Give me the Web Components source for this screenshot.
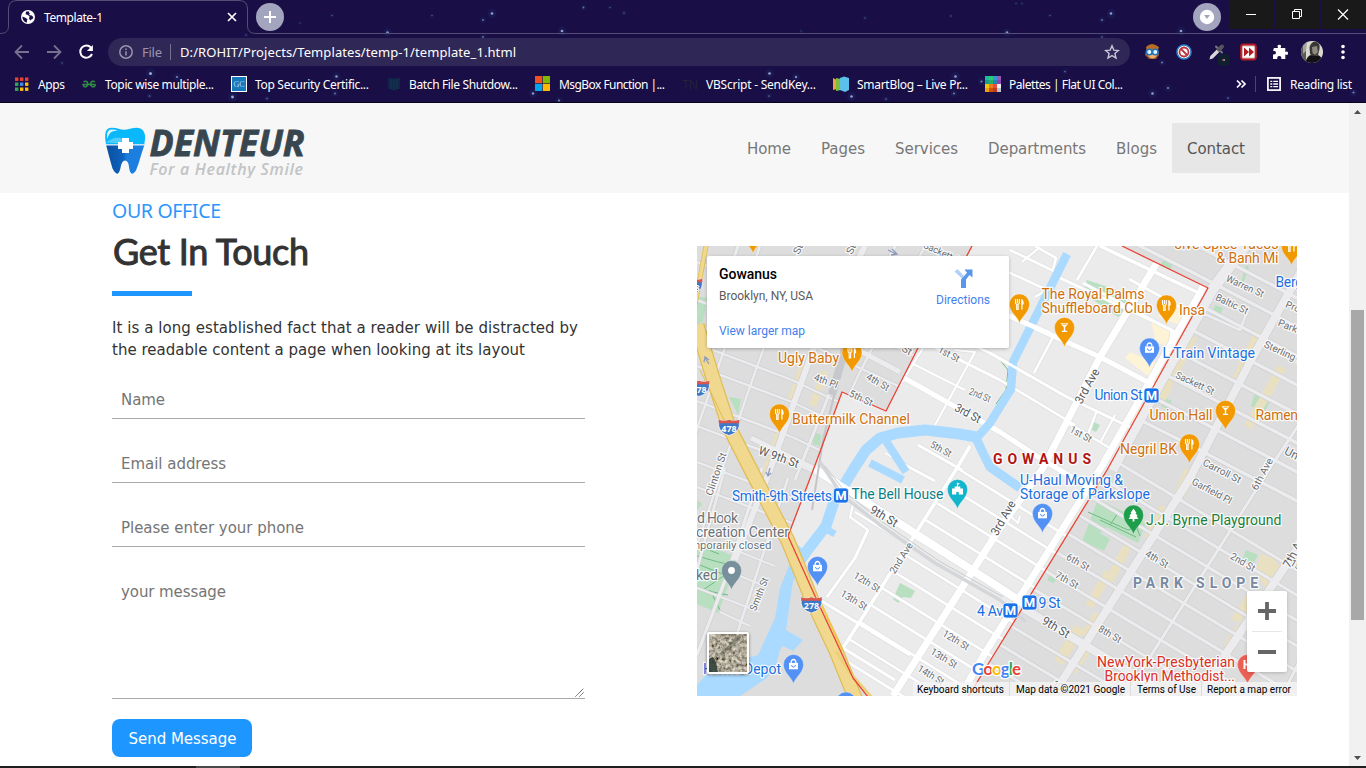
<!DOCTYPE html>
<html lang="en">
<head>
<meta charset="utf-8">
<title>Template-1</title>
<style>
html,body{margin:0;height:768px;overflow:hidden;background:#fff}
body{font-family:"Open Sans","Noto Sans",sans-serif}
</style>
</head>
<body>
<app-window></app-window>

<template id="t-window">
<style>
:host{display:grid;grid-template-rows:103px 663px 2px;width:1366px;height:768px}
main{display:grid;grid-template-columns:1349px 17px;min-height:0}
.task{background:#1f1f1f;display:flex}
.task i{margin-left:196px;width:44px;background:#4a4a4a}
.page{display:grid;grid-template-rows:90px 1fr;background:#fff;overflow:hidden}
.cols{display:grid;grid-template-columns:473px 600px;column-gap:112px;padding-left:112px}
</style>
<browser-chrome></browser-chrome>
<main>
<div class="page"><site-header></site-header>
<div class="cols"><contact-form></contact-form><office-map></office-map></div></div>
<scroll-bar></scroll-bar>
</main>
<div class="task"><i></i></div>
</template>

<template id="t-chrome">
<style>
:host{display:grid;grid-template-rows:34px 36px 32px;height:102px;border-bottom:1px solid #08041d;background:#190e45;color:#fff;position:relative;font:12px "Noto Sans","Open Sans",sans-serif;overflow:hidden}
.sky{position:absolute;inset:0}
.row{display:flex;align-items:center;position:relative}
.tab{width:240px;height:34px;margin-left:8px;display:flex;align-items:center;position:relative;box-sizing:border-box}
.tab>svg.fav{margin-left:13px}
.tab fit-text{margin-left:9px;flex:0 0 60px}
.tab .x{margin-left:123px}
.edge{position:absolute;left:-8px;top:0}
.plus{margin-left:8px}
.acct{margin-left:909px}
.win{margin-left:8px;display:grid;grid-template-columns:45px 45px 45px;column-gap:1px;align-self:flex-start}
.win svg{background:#191919;display:block}
.nav{display:flex;margin-left:13px;gap:14px}
.omni{margin-left:13px;width:1022px;height:28px;border-radius:14px;background:#2f2756;display:flex;align-items:center;font-size:13px;box-sizing:border-box;padding-left:11px}
.omni .file{margin-left:9px;color:#9a94ae}
.omni i{width:1px;height:16px;background:#77718f;margin:0 9px 0 8px}
.omni .star{margin-left:auto;margin-right:10px}
.ext{display:flex;margin-left:11px;align-items:center}
.ext .av{margin-left:2px}
.ext .dots{margin-left:-2px;width:20px;height:28px}
.bm{display:flex;align-items:center;height:28px}
.bm svg{flex:none}
.books{display:flex;padding-left:14px;margin-top:-4px;width:1222px;box-sizing:border-box}
.more{display:flex;align-items:center;margin-top:-4px}
.more i{width:1px;height:16px;background:#4d456c;margin:0 11px 0 9px}
</style>
<svg class="sky" width="1366" height="103"></svg>
<div class="row">
 <div class="tab">
  <svg class="edge" width="1366" height="34" fill="none" stroke="#554d74"><path d="M0 33.5C6 33.5 8.500 31 8.500 26V9Q8.500 .5 17 .5H239Q247.500 .5 247.500 9V26Q247.500 33.500 256 33.500H1366"/></svg>
  <svg class="fav" width="14" height="14" viewBox="0 0 14 14"><circle cx="7" cy="7" r="7" fill="#fff"/><path d="M7.500 1.200L5 1.800 4.600 4.300 6.300 4.700 8.600 6.200 8 8.200 9.200 10.500 10.400 9.500 12 8.600 12.300 7 10.600 5.500 8 5 8.800 3.800z" fill="#190e45"/><path d="M1.400 6.500L4.300 7.800 6.600 9.200 5.800 10.800 6 12.600C3.500 12.400 1.300 9.800 1.400 6.500z" fill="#190e45"/></svg>
  <fit-text w="59">Template-1</fit-text>
  <svg class="x" width="10" height="10" stroke="#fff" stroke-width="1.700"><path d="M1 1l8 8M9 1l-8 8"/></svg>
 </div>
 <svg class="plus" width="28" height="28"><circle cx="14" cy="14" r="14" fill="#a3a5be"/><path d="M14 8v12M8 14h12" stroke="#fff" stroke-width="2"/></svg>
 <svg class="acct" width="28" height="28"><circle cx="14" cy="14" r="14" fill="#a3a5be"/><circle cx="14" cy="14" r="7.200" fill="#fff"/><path d="M11 12h6l-3 4z" fill="#a3a5be"/></svg>
 <div class="win">
  <svg width="45" height="29" stroke="#fff" fill="none"><path d="M17 14.500h10"/></svg>
  <svg width="45" height="29" stroke="#fff" fill="none"><path d="M17.500 11.500h7v7h-7zM19.500 11V9.500h7v7H25"/></svg>
  <svg width="45" height="29" stroke="#fff" stroke-width="1.200" fill="none"><path d="M17 9.500l10 10M27 9.500l-10 10"/></svg>
 </div>
</div>
<div class="row">
 <div class="nav">
  <svg width="18" height="18" viewBox="0 0 18 18" fill="none" stroke="#777190" stroke-width="1.800"><path d="M16 9H3M9 2.500L2.500 9 9 15.500"/></svg>
  <svg width="18" height="18" viewBox="0 0 18 18" fill="none" stroke="#777190" stroke-width="1.800"><path d="M2 9h13M9 2.500L15.500 9 9 15.500"/></svg>
  <svg width="18" height="18" viewBox="0 0 18 18" fill="none" stroke="#fff" stroke-width="2"><path d="M14 4.600A6.100 6.100 0 1 0 15 11"/><path d="M15.900 2v6h-6z" fill="#fff" stroke="none"/></svg>
 </div>
 <div class="omni">
  <svg width="14" height="14" fill="none" stroke="#9a94ae" stroke-width="1.500"><circle cx="7" cy="7" r="6.200"/><path d="M7 6.200V10.500M7 3.500V5"/></svg>
  <fit-text class="file" w="20">File</fit-text><i></i>
  <fit-text w="336">D:/ROHIT/Projects/Templates/temp-1/template_1.html</fit-text>
  <svg class="star" width="16" height="16" viewBox="0 0 16 16" fill="none" stroke="#c9c5d8" stroke-width="1.400"><path d="M8 1.800l1.800 4.300 4.600.4-3.500 3 1.100 4.500L8 11.600 4 14l1.100-4.500-3.500-3 4.600-.4z"/></svg>
 </div>
 <div class="ext">
  <svg width="32" height="28" viewBox="0 0 32 28"><path d="M6 8q5-4 10 0l2 9-3 4H8l-4-4z" fill="#a35b1d"/><ellipse cx="11.500" cy="14.500" rx="5" ry="6" fill="#f2ad76"/><path d="M5 9q6-5 13 0l-1 3H6z" fill="#b96d26"/><g fill="#e6f5ff" stroke="#1c75bd" stroke-width="1.600"><circle cx="8.300" cy="14" r="2.800"/><circle cx="14.300" cy="14" r="2.800"/></g></svg>
  <svg width="32" height="28" viewBox="0 0 32 28"><circle cx="11" cy="14" r="7" fill="#fff" stroke="#2f7fc9" stroke-width="1.600"/><circle cx="11" cy="14" r="4.500" fill="#fff" stroke="#b9343c" stroke-width="1.800"/><path d="M8 11l6 6" stroke="#b9343c" stroke-width="1.800"/></svg>
  <svg width="32" height="28" viewBox="0 0 32 28"><path d="M4.500 21.500l.8-3.500 7-7 2.500 2.500-7 7z" fill="#d8d8d8"/><path d="M11 8.500l6 6" stroke="#77767c" stroke-width="2" stroke-linecap="round"/><path d="M14 11.500l3-3" stroke="#55555c" stroke-width="4" stroke-linecap="round"/><rect x="13" y="16.500" width="11.500" height="11" rx="2" fill="#10202f"/><path d="M17 22h2" stroke="#ff4b4b"/><path d="M18.500 22h1.500" stroke="#fff"/></svg>
  <svg width="32" height="28" viewBox="0 0 32 28"><rect x="4" y="6.500" width="15" height="15" rx="2.500" fill="#d8b6b8" stroke="#b01c22" stroke-width="1.800"/><rect x="6" y="8.500" width="11" height="11" fill="#fff"/><path d="M7 9.500l5 4.500-5 4.500zM12 9.500l5 4.500-5 4.500z" fill="#b01c22"/></svg>
  <svg width="29" height="28" viewBox="0 0 29 28"><path d="M5 10h4q-1.500-3.200 1.300-3.200T11.600 10h4.700v4q2.800-1.300 2.800 1.200t-2.800 1.300v4.500h-4q.5-3-2-3t-2 3H4v-4.500q3 .5 3-1.700t-3-2z" fill="#fff"/></svg>
  <svg class="av" width="32" height="28" viewBox="0 0 32 28"><defs><clipPath id="av"><circle cx="12" cy="14" r="11"/></clipPath></defs><g clip-path="url(#av)"><path d="M0 0h28v28H0z" fill="#d9d9d0"/><path d="M0 0h6v28H0z" fill="#5a5a57"/><path d="M3 5q2-4 4-1l-1 9-3 3z" fill="#a5a59f"/><path d="M9.500 9q2-6 7-5 4 1 3 7l-1.500 6-4 2-4-3z" fill="#3a3835"/><path d="M12 9l5-1 1 6-3 3-2.500-2z" fill="#8f8982"/><path d="M5 28q1-10 6-11 5 2 7 0 5 2 6 11z" fill="#121214"/></g></svg>
  <svg class="dots" viewBox="0 0 20 28" fill="#fff"><circle cx="13" cy="8.500" r="1.800"/><circle cx="13" cy="14" r="1.800"/><circle cx="13" cy="19.500" r="1.800"/></svg>
 </div>
</div>
<div class="row">
 <div class="books"></div>
 <div class="more">
  <svg width="30" height="16" fill="none" stroke="#fff" stroke-width="1.700" style="margin-left:14px;width:10px"><path d="M1 4.500l3.500 3.500L1 11.500M5.500 4.500L9 8l-3.500 3.500"/></svg><i></i>
  <svg width="14" height="14" fill="none" stroke="#fff"><rect x=".9" y=".9" width="12.200" height="12.200" stroke-width="1.700"/><path d="M3.300 4.300h2M6.300 4.300h4.700M3.300 7h2M6.300 7h4.700M3.300 9.700h2M6.300 9.700h4.700" stroke-width="1.300"/></svg>
  <fit-text w="62" style="margin-left:9px">Reading list</fit-text>
 </div>
</div>
</template>

<template id="t-header">
<style>
:host{display:flex;align-items:center;background:#f7f7f7;height:90px;font:15px "DejaVu Sans",sans-serif;color:#777}
.logo{margin-left:104px;display:block}
nav{display:flex;margin-left:426px}
a{padding:0 15px;height:50px;line-height:53px}
a.on{background:#e7e7e7;color:#555}
</style>
<svg class="logo" width="202" height="60" viewBox="104 118 202 60">
<defs><linearGradient id="tr" x1="0" x2="1"><stop offset="0" stop-color="#0b4f9e"/><stop offset=".45" stop-color="#0d63c0"/><stop offset=".55" stop-color="#1c7fe0"/></linearGradient></defs>
<path d="M106 144.500C108 152 110 160 112.500 168.500Q118 179 120.500 168 121.500 160.500 125 160.500T129 167Q130.500 178.500 136 170.500 139 163 140.500 157L144.500 144.500z" fill="url(#tr)"/>
<path d="M106 144C104.500 136 104.500 128 111 127.800 117 127.500 120 130 125 129.800 131 129 136 126.500 141 128.800 146 132 145.500 138 144.300 144z" fill="#08b8fb"/>
<path d="M107 139Q106 130 111 129.500 115 129 117.500 130.800 112 130.500 109.500 134 108 136.500 107 139z" fill="#d7f3ff"/>
<path d="M106 142.500Q118 134 123 140L119 143.500z" fill="#4fcdfc"/>
<path d="M105.500 144.800h39" stroke="#d8efff" stroke-width="1.200"/>
<path d="M122 138h7v4h4v7h-4v4h-7v-4h-4v-7h4z" fill="#fff"/>
<text x="149.500" y="155.500" font-family="Open Sans" font-weight="700" font-style="italic" font-size="35.500" fill="#37464f" stroke="#37464f" stroke-width=".8" textLength="155" lengthAdjust="spacingAndGlyphs">DENTEUR</text>
<text x="149.500" y="174.500" font-family="Open Sans" font-weight="600" font-style="italic" font-size="16" fill="#c2c3c4" textLength="153.500" lengthAdjust="spacing">For a Healthy Smile</text>
</svg>
<nav><a><fit-text w="44">Home</fit-text></a><a><fit-text w="44">Pages</fit-text></a><a><fit-text w="63">Services</fit-text></a><a><fit-text w="98">Departments</fit-text></a><a><fit-text w="41">Blogs</fit-text></a><a class="on"><fit-text w="58">Contact</fit-text></a></nav>
</template>

<template id="t-form">
<style>
:host{display:flex;flex-direction:column;font:15px "DejaVu Sans",sans-serif;color:#333}
.o{font:400 19.500px/26px "Noto Sans",sans-serif;color:#2c96fb;margin-top:5px}
h2{margin:4px 0 0;font:400 36px/46px Lato,sans-serif;-webkit-text-stroke:1px #333;padding-left:1px}
hr{margin:17px 0 21px;border:0;width:80px;height:5px;background:#1e96ff}
p{margin:0 0 20px;line-height:22px;height:44px}
.btn{margin-top:20px;width:139px;padding-left:1px;height:38px;border-radius:8px;background:#1e96ff;color:#fff;line-height:41px;text-align:center}
</style>
<div class="o"><fit-text w="109">OUR OFFICE</fit-text></div>
<h2><fit-text w="196">Get In Touch</fit-text></h2>
<hr>
<p><fit-text w="466">It is a long established fact that a reader will be distracted by</fit-text><br><fit-text w="413">the readable content a page when looking at its layout</fit-text></p>
<form-field><fit-text w="44">Name</fit-text></form-field>
<form-field><fit-text w="105">Email address</fit-text></form-field>
<form-field><fit-text w="183">Please enter your phone</fit-text></form-field>
<form-field area><fit-text w="105">your message</fit-text></form-field>
<div class="btn"><fit-text w="108">Send Message</fit-text></div>
</template>

<template id="t-field">
<style>
:host{display:block;box-sizing:border-box;height:38px;margin-bottom:26px;padding-left:9px;border-bottom:1px solid #aaa;line-height:38px;color:#757575;position:relative}
:host([area]){height:126px;margin-bottom:0}
svg{display:none;position:absolute;right:1px;bottom:1px}
:host([area]) svg{display:block}
</style><slot></slot><svg width="9" height="9" stroke="#444"><path d="M.5 8.500l8-8M4.500 8.500l4-4" stroke-dasharray="1.200 .4"/></svg>
</template>

<template id="t-scroll">
<style>
:host{display:grid;grid-template-rows:17px 190px 310px 1fr 17px;background:#f1f1f1;justify-items:center;align-items:center}
i{grid-row:3;width:13px;height:310px;background:#a8a8a8}
svg:last-child{grid-row:5}
</style>
<svg width="7" height="4"><path d="M0 4L3.500 0 7 4z" fill="#505050"/></svg><i></i><svg width="7" height="4"><path d="M0 0h7L3.500 4z" fill="#505050"/></svg>
</template>

<template id="t-map">
<style>
:host{display:block;width:600px;height:450px;margin-top:53px;position:relative;overflow:hidden;font-family:Roboto,sans-serif}
svg.m{display:block}
.card{position:absolute;left:10px;top:10px;width:302px;height:92px;box-sizing:border-box;background:#fff;border-radius:2px;box-shadow:0 1px 4px -1px rgba(0,0,0,.4);display:flex;justify-content:space-between;padding:10px 19px 0 12px;font-size:12px;color:#5b5b5b}
.card b{display:block;font:500 14px/17px Roboto;color:#000}
.card .a{line-height:15px;margin-top:6px}
.card .l{margin-top:20px;line-height:15px;color:#427fed}
.dir{color:#427fed;text-align:center;line-height:15px;padding-top:3px}
.dir svg{display:block;margin:0 auto 5px}
.sat{position:absolute;left:10px;top:386px;border:2px solid #fff;border-radius:2px;width:38px;height:38px;box-shadow:0 1px 3px rgba(0,0,0,.5)}
.zoom{position:absolute;left:550px;top:345px;width:40px;height:81px;background:#fff;border-radius:2px;box-shadow:0 1px 4px -1px rgba(0,0,0,.3)}
.foot{position:absolute;right:0;bottom:0;height:14px;width:384px;box-sizing:border-box;display:flex;align-items:center;background:rgba(245,245,245,.8);font-size:10px;color:#000;padding-left:4px}
.foot i{width:1px;height:14px;background:#dcdcdc;margin:0 6px 0 5px}
</style>
<svg class="m" width="600" height="450" viewBox="697 246 600 450"></svg>
<div class="card"><div><b><fit-text w="58">Gowanus</fit-text></b><div class="a"><fit-text w="94">Brooklyn, NY, USA</fit-text></div><div class="l"><fit-text w="86">View larger map</fit-text></div></div>
<div class="dir"><svg width="19" height="19" viewBox="0 0 19 19"><path d="M.5 2.500L3.500 0 9.500 6.500V11z" fill="#b3d1f7"/><path d="M7 19V10.500L13 3.800 10.500.500H18.500V8.500L15.500 6 12 10.500V19z" fill="#5a97ea"/></svg><fit-text w="54">Directions</fit-text></div></div>
<div class="sat"><svg width="38" height="38"><defs><filter id="n" x="0" y="0" width="1" height="1"><feTurbulence type="fractalNoise" baseFrequency=".3" numOctaves="4" seed="8"/><feColorMatrix values=".9 .5 0 0 -.27  .9 .45 0 0 -.28  .8 .4 0 0 -.28  0 0 0 0 1"/></filter></defs><rect width="38" height="38" filter="url(#n)"/><path d="M0 25l4-2 3 5 2 10H0z" fill="#20352c" opacity=".8"/><path d="M27 2l5 0-2 5-9 8-8 6-3-1 9-8z" fill="#33382e" opacity=".35"/></svg></div>
<div class="zoom"><svg width="40" height="81"><path d="M20 11v18M11 20h18M11 61h18" stroke="#666" stroke-width="3.800"/><path d="M5 40.500h30" stroke="#e6e6e6"/></svg></div>
<div class="foot"><fit-text w="87">Keyboard shortcuts</fit-text><i></i><fit-text w="109">Map data ©2021 Google</fit-text><i></i><fit-text w="59">Terms of Use</fit-text><i style="margin-right:5px"></i><fit-text w="84">Report a map error</fit-text></div>
</template>

<script>
const stamp = (el, id) => {
  const r = el.attachShadow({mode: 'open'});
  r.append(document.getElementById(id).content.cloneNode(true));
  return r;
};

// Text run whose tracking is adjusted to occupy the given width.
customElements.define('fit-text', class extends HTMLElement {
  constructor() {
    super();
    this.attachShadow({mode: 'open'}).innerHTML = '<style>:host{display:inline-block;white-space:nowrap}span{display:inline-block}</style><span><slot></slot></span>';
  }
  connectedCallback() {
    const w = +this.getAttribute('w'), s = this.shadowRoot.querySelector('span');
    const n = this.textContent.length;
    s.style.letterSpacing = '0px';
    const nat = s.getBoundingClientRect().width;
    s.style.letterSpacing = ((w - nat) / (n - 1)).toFixed(4) + 'px';
    this.style.width = w + 'px';
  }
});

customElements.define('form-field', class extends HTMLElement { connectedCallback() { if (!this.shadowRoot) stamp(this, 't-field'); } });
customElements.define('scroll-bar', class extends HTMLElement { connectedCallback() { if (!this.shadowRoot) stamp(this, 't-scroll'); } });
customElements.define('site-header', class extends HTMLElement { connectedCallback() { if (!this.shadowRoot) stamp(this, 't-header'); } });
customElements.define('contact-form', class extends HTMLElement { connectedCallback() { if (!this.shadowRoot) stamp(this, 't-form'); } });

customElements.define('browser-chrome', class extends HTMLElement {
  connectedCallback() {
    if (this.shadowRoot) return;
    const r = stamp(this, 't-chrome');
    const stars = [[150.5,73.500,1.800],[177,77,1.300],[232.500,97,1.700],[149.500,96,1],[267,98.500,1],[335,93.500,1.100],[336.500,76.500,1.500],[387.500,32.500,1.500],[332,15.500,.8],[432,15.500,.8],[300,23,.7],[62,63,.8],[246,35,.8],[492,13.500,1.600],[583.500,7.500,1.100],[562,31,1.600],[483,20,1.100],[483,37,1.100],[610,7.500,.8],[624,13,.9],[769.500,73.500,1.600],[533,93.500,1.500],[559,100.500,1.300],[851.500,96.500,1.600],[796,77,1.400],[865,18,.8],[801,31,.7],[769,96,1],[886,99,1],[1111,13.500,1.600],[1102,20,1.100],[1181,31,1.600],[1102,37,1],[1152.500,93.500,1.600],[1168,88,1.300],[1162,62.500,1.200],[1353.500,92.500,1.300],[955.500,76.500,1.600],[954,93.500,1.200],[981.500,81.500,1.300],[1007,32.500,1.500],[1065,71.500,1],[951,16,.8],[1016,3.500,.7],[1022,3.500,.7],[1050,15.500,.8],[1228,98,1]];
    r.querySelector('.sky').innerHTML = stars.map(([x, y, s]) => `<circle cx="${x}" cy="${y}" r="${s*2.800}" fill="#27489a" opacity=".16"/><circle cx="${x}" cy="${y}" r="${s*.85}" fill="#99a8d0" opacity="${Math.min(1, s/1.700)}"/>`).join('');
    const sq = (x, y, s, c) => `<rect x="${x}" y="${y}" width="${s}" height="${s}" fill="${c}"/>`;
    let apps = '';
    ['#ea4335','#ea4335','#ea4335','#34a853','#4285f4','#fbbc05','#34a853','#fbbc05','#fbbc05'].forEach((c, i) => apps += sq(1 + i%3*5, 1.500 + Math.floor(i/3)*5, 3.400, c));
    let pal = '';
    ['#1abc9c','#2ecc71','#3498db','#9b59b6','#16a085','#27ae60','#2980b9','#8e44ad','#f1c40f','#e67e22','#e74c3c','#ecf0f1','#f39c12','#d35400','#c0392b','#bdc3c7'].forEach((c, i) => pal += sq(1+i%4*4, Math.floor(i/4)*4, 4.100, c));
    const items = [
      [67, apps, 27, 'Apps', 7],
      [150, '<g fill="none" stroke="#2f8d46" stroke-width="1.500"><path d="M2.500 5.800Q5 4.300 6.500 6.300 7.500 9 5.500 10.500 2.500 11.500 2 8.500H14.500"/><path d="M14 5.800Q11.500 4.300 10 6.300 9 9 11 10.500 14 11.500 14.500 8.500"/></g>', 109, 'Topic wise multiple...', 7],
      [155, '<rect x=".5" y=".5" width="15" height="15" fill="#1678bd" stroke="#fff"/><text x="8" y="11" text-anchor="middle" font-family="Liberation Serif" font-size="8" fill="#b4d8f0">GC</text>', 114, 'Top Security Certific...', 7],
      [148, '<path d="M2 2q3-1 6 1 3-2 6-1v11q-3 0-6 2-3-2-6-2z" fill="#122447"/><path d="M8 3v11M5 3v10M11 3v10" stroke="#163a57"/>', 109, 'Batch File Shutdow...', 6],
      [148, sq(1,0,7.200,'#f25022')+sq(8.800,0,7.200,'#7fba00')+sq(1,7.800,7.200,'#00a4ef')+sq(8.800,7.800,7.200,'#ffb900'), 106, 'MsgBox Function |...', 8],
      [150, '<text x="0" y="12.500" font-family="Liberation Sans" font-size="12.500" fill="#24213b" textLength="16">TN</text>', 110, 'VBScript - SendKey...', 7],
      [152, '<path d="M1 2l4 2v9l-4 1z" fill="#f6a03a"/><path d="M4 2l5 1v11l-5 1z" fill="#7bbf3e"/><path d="M8 2l4-1.500L17 2v12l-4 2-5-2z" fill="#5cc0ea"/>', 111, 'SmartBlog – Live Pr...', 8],
      [152, pal, 114, 'Palettes | Flat UI Col...', 8]
    ];
    r.querySelector('.books').innerHTML = items.map(([w, g, t, s, m]) => `<div class="bm" style="width:${w}px"><svg width="17" height="16" viewBox="0 0 17 16">${g}</svg><fit-text style="margin-left:${m}px" w="${t}">${s}</fit-text></div>`).join('');
    r.querySelectorAll('.books fit-text').forEach(e => e.connectedCallback());
  }
});

customElements.define('office-map', class extends HTMLElement {
  connectedCallback() {
    if (this.shadowRoot) return;
    const r = stamp(this, 't-map');
    const core = 'M972 246H1122L1208 288 1107 470 990 661 970 696H867L853 678 815 596 788 536 814 468 842 392 886 411 918 348Z';
    const line = (pts, w, c) => `<polyline points="${pts}" fill="none" stroke="${c}" stroke-width="${w}" stroke-linejoin="round"/>`;
    let dark = [], light = [];
    const D = (p, w = 2.600) => dark.push([p, w]);
    const L = (p, w = 2.600) => light.push([p, w]);
    // casings go under all fills so that junctions stay open
    const net = (a, edge, fill) => a.map(([p, w]) => line(p, w + 1.400, edge)).join('') + a.map(([p, w]) => line(p, w, fill)).join('');

    // Park Slope side streets
    for (let k = -3; k < 9; k++) { const y = 668 - k*25.300; D(`950,${y-173*.6} 1123,${y} 1320,${y+197*.6}`, k ? 3 : 8); }
    for (let k = 0; k < 8; k++) { const y = 415 - k*29; D(`1130,${y} 1190,${y+30} 1320,${y+98}`, 3.500); }
    D('1245,246 1212,290 1150,400 1112,470', 11);
    D('1310,255 1250,362 1190,478 1050,700', 8);
    D('1310,408 1270,468 1143,668 1125,700', 3);
    D('1310,530 1225,655 1200,700', 8);
    D('1310,640 1280,700', 3);
    D('1247,312 1240,330 1200,312', 2.500);

    // west of the expressway and Carroll Gardens
    [[697,262],[697,300],[697,344],[697,366],[697,401],[697,426],[697,462],[697,487]].forEach(([x, y]) => D(`${x},${y} ${x+95},${y+36} ${x+235},${y+102}`, 2.400));
    D('760,246 700,420 690,450', 2.400); D('865,246 813,350 770,470 735,560', 6); D('800,246 747,395 697,545', 2.400);
    D('738,246 720,300 697,350', 3); D('895,246 838,372 795,480', 3); D('925,246 860,372 810,478', 2.400);
    D('762,468 727,575 697,655', 3.200); D('788,478 735,640', 2.600); D('725,468 705,540 697,570', 2.600);
    D('697,588 760,612', 2); D('720,612 750,626', 2); D('735,550 775,566', 2); D('725,570 765,586', 2);
    D('751,438 813,468', 5); D('830,335 900,372', 5);

    // Gowanus streets
    L('830,340 890,370 1000,432 1043,460 1110,500', 5);
    L('930,345 1000,380 1075,425'); L('940,330 990,353 1067,397 1140,432', 3);
    L('1005,314 1100,357 1157,387', 5); L('1010,250 1060,274'); L('1008,272 1043,288');
    L('1053,286 1035,297'); L('1022,262 1040,247', 2.200); L('1035,246 1056,258 1053,269');
    L('1083,283 1180,335'); L('1077,280 1097,246'); L('1100,246 1203,295', 3.500);
    L('1060,278 1172,330 1170,345'); L('1129,279 1185,310'); L('1068,423 1113,450');
    L('1053,337 1034,373'); L('1097,410 1087,437', 2.200); L('1115,415 1100,443', 2.200); L('1100,246 1155,272');
    L('955,350 975,352 935,425', 2.200); L('925,345 900,385', 2.200); L('886,350 935,375 965,390', 2.200);
    L('918,445 962,470', 3); L('905,465 935,481', 3); L('885,453 918,472', 1.600);
    for (let k = 0; k < 12; k++) { const x = 957 - k*10.800, y = 468 + k*17.100; L(`${x},${y} ${x+190},${y+118}`); }
    L('813,468 1000,588 1123,668', 8); L('751,438 813,468', 6);
    L('970,446 957,468 843,648', 3.500); L('1167,246 1100,357 1043,468 1000,528 893,696', 7);
    L('1220,246 1200,293 1102,466 985,653 958,700', 7);
    L('853,505 850,517 868,530', 2.200); L('868,530 855,558 827,597', 3); L('820,600 910,655', 3); L('843,648 895,680', 3);
    L('855,512 893,535', 2.200); L('1020,516 1018,523 1008,514', 2);

    const aqua = '#aadaff';
    const water = line('1067,254 1013,362 1011,389 990,423 974,441', 8.500, aqua) + line('976,437 960,434 925,430 898,433 880,438 866,450 853,470 834,502 826,526 803,556', 11, aqua)
      + line('975,436 983,453 990,467 1020,488', 9, aqua) + line('886,441 906,472', 8, aqua) + line('870,463 903,480', 8, aqua) + line('822,527 835,534', 7, aqua)
      + `<path d="M798 545L790 563 780 588 775 618 758 655 712 668 697 685V696H740L767 678 776 665 780 650 783 646 793 651 803 640 786 630 790 601 793 581 810 556z" fill="${aqua}"/>`;
    const green = '#b8dfc0';
    const parks = `<g fill="${green}"><path d="M697 296l10 2-4 24-6 3zM729 397l12 2-3 16zM814 432l7 3-1 11-7-2z"/><path d="M697 540l34 15 6 8-19 50-21-9zM697 500l5 4-5 6z"/><path d="M1087 280l30 10 14 17-13 10-35-24zM1098 499l48 24 -8 20-32-16-6 6 10 6-6 12-22-10 8-20zM1215 305l8 3-4 10-7-3zM1165 398l7 3-5 8-6-3zM1255 392l16 6-6 14-14-6zM1094 422l6 3-4 7-6-3zM1164 259l10 4-4 7-10-5zM1246 265l3 2-7 20-2-2zM1246 550l12 5-5 9-10-6zM1050 574l8 4-5 5-6-3zM900 583l15 8-4 7-8-1-5 6-5-4z"/></g>
    <path d="M697 556q20 6 38 10M700 565l25 10-22 15 25 5M710 590l10 20M699 546l20 8M1088 512l40 18 12-4M1110 525l8-12 14 3 8 20M1100 520l36 17M1000 360l8 10-2 20-10 14" fill="none" stroke="#6dbb83" stroke-width="1"/>`;
    const shops = `<g fill="#e9dfc1"><path d="M776 430l8 3-20 60-8-2zM800 365l7 2-14 38-7-3zM822 370l6 2-12 35-7-3zM1191 335l6 3-33 65-7-3zM1255 330l9 5-25 50-8-4zM1278 365l8 4-34 60-8-4zM1210 430l7 3-25 48-7-4zM1185 468l12 5-12 24-10-5zM1160 505l10 4-17 32-9-4zM1125 542l8 3-20 38-8-4zM1105 570l8 4-20 34-8-4zM1075 625l10 5-22 35-9-5zM1094 612l7 3-13 22-7-3zM1085 645l8 4-18 25-7-4zM1260 554l15 5 8 14-18 15-8-16zM1250 590l9 5-20 28-8-4zM1237 625l9 5-16 20-7-4z"/></g>`;
    const cream = `<g fill="#fdf3d6"><path d="M1158 316l32 14 8-18-26-12zM1130 352l28 12-5 16-28-22zM1150 318l38 18-8 14-24-8zM1158 370l16 8-6 10-18-8zM1133 403l9 3-5 18-9-4z"/></g>`;
    const hw = '697,325 712,375 729,427 752,472 788,541 812,600 836,651 856,700';
    const road = line(hw, 15, '#e0bd57') + line(hw, 12.500, '#f0d88f') + line('700,370 726,424', 1, '#e0bd57') + line('706,246 694,310', 5, '#e0bd57') + line('706,246 694,310', 3.500, '#f0d88f') + line('836,651 850,673 876,702', 3, '#edcf78') + line('842,651 822,605', 1.300, '#f7c948');
    const rail = line('835,392 823,440 812,510', 2, '#c3c5c8') + line('845,348 832,395', 8, '#c6c8cb') + line('820,462 842,495 880,525 935,563 1000,600 1026,622', 3.500, '#d4d6d9') + line('825,466 846,493 884,523 939,561 1003,597', .8, '#bfc1c5');
    const red = line('972,246 918,348 886,411 842,392 814,468 788,536 815,596 853,678 868,697', 1.300, '#ea4335') + line('1122,246 1208,288 1107,470 990,661 968,697', 1.300, '#ea4335');

    const txt = (s, x, x2, y, c, o = '') => `<text x="${x}" y="${y}" fill="${c}" font-size="14" textLength="${x2-x}" ${o}>${s}</text>`;
    const st = (s, x, y, a, w, f = 10, c = '#6b6e73') => `<text transform="translate(${x} ${y}) rotate(${a})" y="${f*.35}" text-anchor="middle" font-size="${f}" fill="${c}" stroke-width="2.400" textLength="${f === 10 ? w*1.12 : w}" lengthAdjust="spacingAndGlyphs">${s}</text>`;
    const OR = '#d0700c', BL = '#1a6fe0';
    const streets = [
      st('4th Pl',826,381,20,22),st('4th St',878,382,30,22),st('5th St',861,398,25,22),st('5th St',941,449,28,20),st('W 9th St',779,457,20,42,12,'#55585c'),
      st('3rd St',968,413,28,28,12,'#55585c'),st('2nd St',980,395,22,20),st('1st St',949,354,28,20),st('1st St',1081,434,28,21),
      st('3rd Ave',1087,386,-61,38,12,'#55585c'),st('3rd Ave',1003,518,-60,38,12,'#55585c'),st('2nd Ave',901,558,-58,31),
      st('Warren St',1245,286,24,36),st('Baltic St',1232,304,25,31),st('Sackett St',1195,383,25,37),st('Sterling Pl',1285,353,25,40),st('Park Pl',1293,328,22,28),st('Prospect Pl',1309,313,22,44),
      st('Union St',1305,460,28,44,12),st('Carroll St',1222,471,27,37),st('Garfield Pl',1212,491,28,39),st('6th Ave',1262,474,-62,31),st('7th Ave',1295,550,-62,38,12,'#55585c'),
      st('6th St',1078,562,29,22),st('7th St',1067,580,29,22),st('4th St',1157,559,30,22),st('2nd St',1243,562,30,24),st('8th St',1110,634,30,22),
      st('9th St',884,516,31,30,12,'#55585c'),st('9th St',1056,627,31,30,12,'#55585c'),st('12th St',867,582,31,26),st('13th St',854,600,31,26),st('12th St',956,640,31,26),st('13th St',944,658,31,26),st('14th St',931,675,31,26),
      st('Clinton St',716,474,-71,40),st('Smith St',759,594,-68,31),st('Sackett St',943,253,25,37),st('St',798,249,-65,9),st('St',851,249,-65,9),st('St',907,350,30,9),st('1st St',1302,568,30,22),st('10th St',1066,690,30,26),st('10th St',1120,695,30,26)
    ].join('');
    const labels = `<g stroke="#fff" stroke-opacity=".85" stroke-width="2.500" stroke-linejoin="round" paint-order="stroke" font-family="Roboto">${streets}`
      + txt('Ugly Baby',778,839,363,OR)+txt('Buttermilk Channel',792,910,424,OR)+txt('The Royal Palms',1041.500,1144.500,299,OR)+txt('Shuffleboard Club',1041.500,1152.500,313,OR)
      + txt('Insa',1179,1205,315,OR)+txt('5ive Spice Tacos',1174,1278.500,249,OR)+txt('&amp; Banh Mi',1216.500,1278.500,263,OR)+txt('Union Hall',1149.500,1212.500,420,OR)+txt('Ramen',1255.500,1298,420,OR)+txt('Negril BK',1120,1177,454,OR)
      + txt('L Train Vintage',1162.500,1255,358,BL)+txt('Union St',1094.500,1142.500,400,BL)+txt('Berg',1275.500,1303,287,BL)+txt('Smith-9th Streets',732,832,501,BL)+txt('4 Av',977,1003,616,BL)+txt('9 St',1038.500,1060.500,608,BL)
      + txt('U-Haul Moving &amp;',1020,1123,485,BL)+txt('Storage of Parkslope',1020,1150,499,BL)+txt('Home Depot',703,781,674,BL)
      + txt('The Bell House',851.500,943.500,499,'#0b7f89')+txt('J.J. Byrne Playground',1146,1281.500,525,'#188038')
      + txt('d Hook',697,738,523,'#6b7379')+txt('creation Center',696,789,537,'#6b7379')+txt('nporarily closed',694,771.500,549,'#6b7379','style="font-size:11.500px"')+txt('ked',696,718,580,'#6b7379')
      + txt('NewYork-Presbyterian',1097,1235,667,'#d93025')+txt('Brooklyn Methodist...',1104.500,1235,681,'#d93025')
      + txt('GOWANUS',993,1091,464,'#b31412','font-weight="700"')+txt('PARK SLOPE',1133,1258,588,'#7789a3','font-weight="700"')
      + `</g><text x="972" y="675" font-family="Lato" font-weight="700" font-size="17" textLength="49" stroke="#fff" stroke-width="2.500" paint-order="stroke"><tspan fill="#4285f4">G</tspan><tspan fill="#ea4335">o</tspan><tspan fill="#fbbc05">o</tspan><tspan fill="#4285f4">g</tspan><tspan fill="#34a853">l</tspan><tspan fill="#ea4335">e</tspan></text>`;

    const glyph = {
      food: '<path d="M-4-5v3.500q0 1.500 1.200 1.800V5.500h1.400V.3Q-.2 0-.2-1.500V-5M-2.100-5v4" fill="none" stroke="#fff" stroke-width="1.100"/><path d="M1.800 5.500V-5Q4.300-4.500 4.200 0L3 1V5.500z" fill="#fff"/>',
      bar: '<path d="M-4-4.300H4L.7-.3V3.300H2.600V4.500H-2.600V3.300H-.7V-.3z" fill="#fff"/><path d="M-2-3.200h4" stroke="#f29900" stroke-width=".8"/>',
      shop: '<path d="M-4.500-1.600H4.500V4.800H-4.500z" fill="#fff"/><path d="M-2.300-1.500V-2.700a2.300 2.300 0 0 1 4.600 0V-1.500" fill="none" stroke="#fff" stroke-width="1.300"/><path d="M-2 .5a2 2 0 0 0 4 0" fill="none" stroke="#5491f5"/>',
      civic: '<path d="M-5.500 5V-1H-2.800V-3H-.6V-7L2.500-5.800 .5-4.800V-3H2.800V-1H5.500V5H1.300V2.500H-1.300V5z" fill="#fff"/>',
      tree: '<path d="M0-6.500L3-2H2L4.300 1.300H3L5 4H.9V6.500H-.9V4H-5L-3 1.300H-4.300L-2-2H-3z" fill="#fff"/>',
      dot: '<circle r="3.400" fill="#fff"/>',
      hosp: '<path d="M-3-4.500V4.500M3-4.500V4.500M-3 0H3" stroke="#fff" stroke-width="2"/>'
    };
    const pin = (x, y, c, g) => `<g transform="translate(${x} ${y})"><path d="M0 19.500C-1.300 13-10 8.500-10 0A10 10 0 0 1 10 0C10 8.500 1.300 13 0 19.500z" fill="${c}" stroke="#fff" stroke-opacity=".5" stroke-width=".6"/>${glyph[g]}</g>`;
    const O = '#f29900', B = '#5491f5';
    const pins = [[852,352.500,O,'food'],[779.500,414,O,'food'],[753,234,O,'food'],[1019.500,304,O,'food'],[1166.500,305,O,'food'],[1064.500,327.500,O,'bar'],[1291.500,246,O,'food'],[1225.500,410.500,O,'bar'],[1189.500,444,O,'food'],[1149.500,348,B,'shop'],[817.500,566.500,B,'shop'],[793.500,664.500,B,'shop'],[846,702,B,'shop'],[1042.500,513.500,B,'shop'],[957.500,489.500,'#12b5cb','civic'],[1133.500,515,'#1e9e4a','tree'],[731.500,570.500,'#78909c','dot'],[1247.500,664.500,'#ea6055','hosp']].map(p => pin(...p)).join('');
    const metro = [[1151.500,395.500],[841,495.500],[1010.500,610.500],[1029.500,602.500]].map(([x, y]) => `<rect x="${x-7.500}" y="${y-7.500}" width="15" height="15" rx="3" fill="#1a73e8" stroke="#fff" stroke-width=".7"/><text x="${x}" y="${y+4.700}" text-anchor="middle" font-family="Roboto" font-weight="700" font-size="13" fill="#fff">M</text>`).join('');
    const shield = (x, y, s) => `<g transform="translate(${x} ${y})"><path d="M-10.300-7Q-5-5 0-7 5-5 10.300-7V-1Q9 6 0 8.500-9 6-10.300-1z" fill="#3f78c9" stroke="#fff" stroke-width=".7"/><path d="M-10.300-7.300Q-5-5.300 0-7.300 5-5.300 10.300-7.300V-3.800H-10.300z" fill="#d9574f"/><text y="4.500" text-anchor="middle" font-family="Open Sans" font-weight="700" font-size="9" fill="#fff" textLength="15.500">${s}</text></g>`;
    const arrows = `<g fill="none" stroke="#8f9dba" stroke-width="1.300"><path d="M888 250l8 4M892 249l5 5-6 1M709 364l-4-6M704 362l1-5 4 3M770 468l-2 7M766 472l2 4 3-3"/></g>`;

    r.querySelector('.m').innerHTML = `<defs><clipPath id="core"><path d="${core}"/></clipPath></defs>
      <rect x="697" y="246" width="600" height="450" fill="#dddddd"/>
      ${parks}${shops}${net(dark, '#cfd0d3', '#ececee')}
      <path d="${core}" fill="#ebebeb"/>
      <g clip-path="url(#core)">${cream}${parks}${net(light, '#dfe0e2', '#fff')}</g>
      ${water}<g clip-path="url(#core)">${line('1005,314 1050,334',5,'#fff')}${line('990,353 1030,376',2.600,'#fff')}${line('813,468 900,524',7,'#fff')}</g>
      ${rail}${road}${red}${arrows}${labels}${pins}${metro}
      ${shield(699,388,'278')}${shield(729,427,'478')}${shield(811.500,604.500,'278')}${shield(692,286,'278')}`;
  }
});

customElements.define('app-window', class extends HTMLElement { connectedCallback() { if (!this.shadowRoot) stamp(this, 't-window'); } });
</script>
</body>
</html>
